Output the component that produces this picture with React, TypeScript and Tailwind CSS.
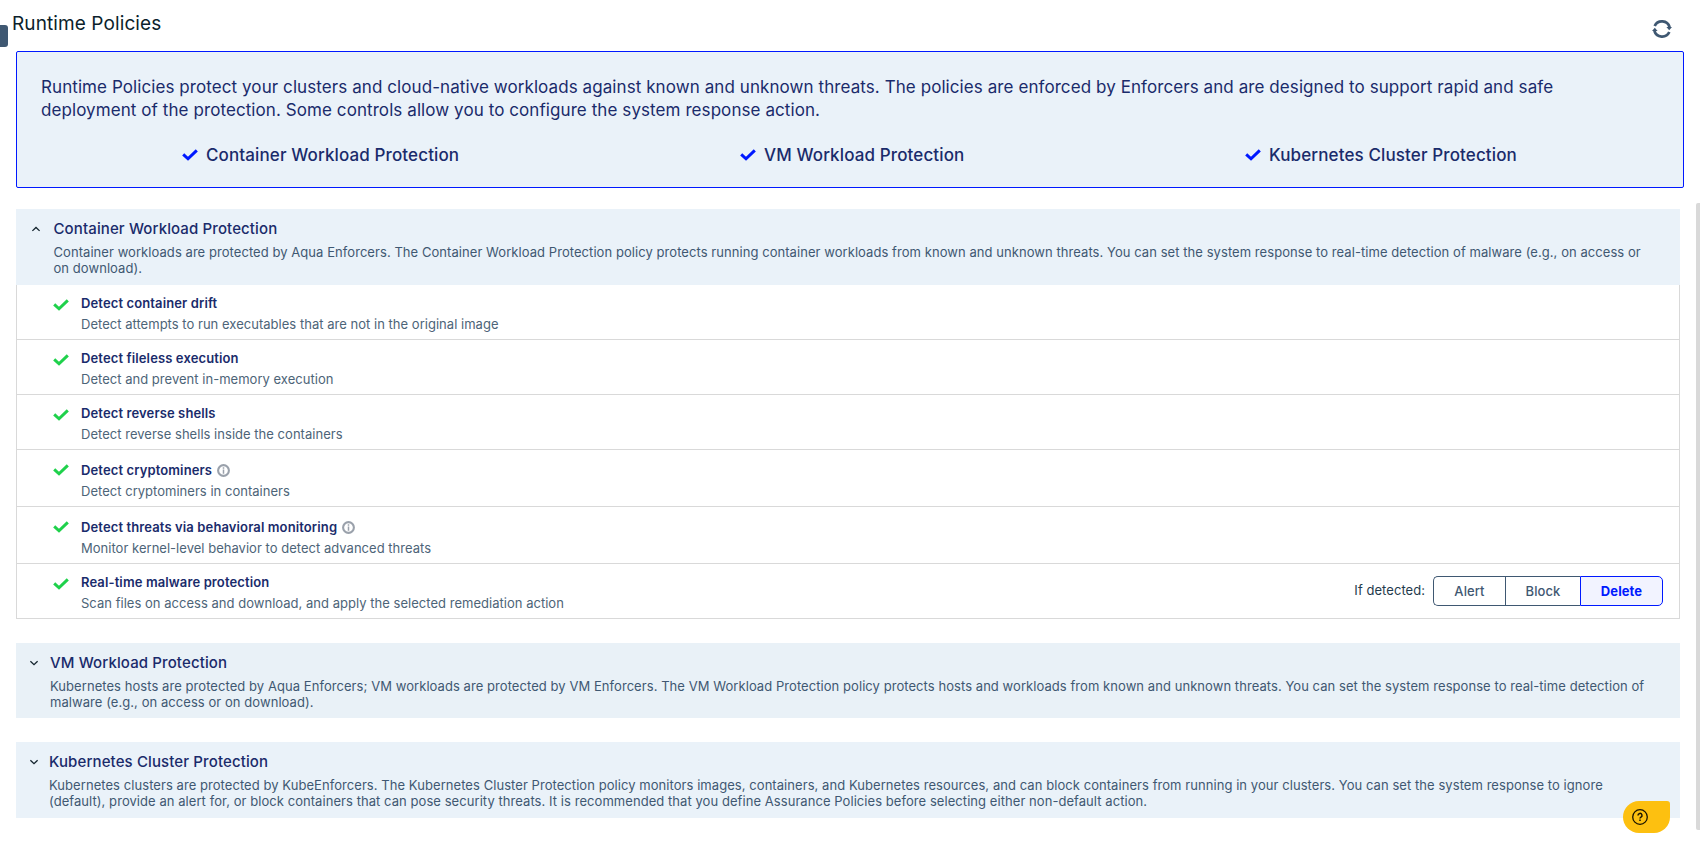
import React from "react";

const CheckMark = ({ className }: { className: string }) => (
  <svg viewBox="0 0 16 12" fill="none" stroke="currentColor" className={className}>
    <path d="M1.2 5.4 L6 9.8 L14.8 1.4" strokeWidth="3" />
  </svg>
);

const Chevron = ({ up = false }: { up?: boolean }) => (
  <svg viewBox="0 0 10 6" fill="none" stroke="#14242e" strokeWidth="1.3" className="mt-[9px] h-[6px] w-[10px] shrink-0">
    <path d={up ? "M1.4 4.9 L5 1.5 L8.6 4.9" : "M1.4 1.3 L5 4.7 L8.6 1.3"} />
  </svg>
);

const InfoIcon = () => (
  <svg viewBox="0 0 13 13" fill="none" className="mb-px ml-[4.5px] h-[13px] w-[13px]">
    <circle cx="6.5" cy="6.5" r="5.4" stroke="#9aa1ab" strokeWidth="2.1" />
    <path d="M6.5 3.2v1.5M6.5 5.5v4.2" stroke="#9aa1ab" strokeWidth="1.5" />
  </svg>
);

type Control = { title: string; text: string; info?: boolean; actions?: boolean };

const controls: Control[] = [
  { title: "Detect container drift", text: "Detect attempts to run executables that are not in the original image" },
  { title: "Detect fileless execution", text: "Detect and prevent in-memory execution" },
  { title: "Detect reverse shells", text: "Detect reverse shells inside the containers" },
  { title: "Detect cryptominers", text: "Detect cryptominers in containers", info: true },
  { title: "Detect threats via behavioral monitoring", text: "Monitor kernel-level behavior to detect advanced threats", info: true },
  { title: "Real-time malware protection", text: "Scan files on access and download, and apply the selected remediation action", actions: true },
];

const ActionGroup = () => (
  <div className="mr-4 ml-auto flex items-start pt-3">
    <span className="mt-1 mr-2 text-[13px] leading-[20px] tracking-[0.05px] text-[#1f3b4d]">If detected:</span>
    <div className="flex h-[30px] text-[13px] leading-[20px] font-medium tracking-[0.1px] text-[#3f5872]">
      <button className="w-[72px] rounded-l-[5px] border border-r-0 border-[#3f5872]">Alert</button>
      <button className="w-[75px] border border-r-0 border-[#3f5872]">Block</button>
      <button className="w-[83px] rounded-r-[5px] border border-[#0019ff] bg-[#f2f3ff] font-bold text-[#0019ff]">Delete</button>
    </div>
  </div>
);

const ControlRow = ({ title, text, info, actions }: Control) => (
  <div className={`flex border-b border-[#d9d9d9] pl-9 ${info ? "h-[57px]" : "h-[55px]"}`}>
    <CheckMark className="mt-[14px] h-[12px] w-[16px] text-[#1fd14b]" />
    <div className={`ml-[12px] ${info ? "pt-[11px]" : "pt-[9px]"}`}>
      <div className="flex h-[20px] items-center text-[13px] font-semibold tracking-[0.12px] text-[#1a2b6b]">
        {title}
        {info && <InfoIcon />}
      </div>
      <p className="text-[13px] leading-[20px] tracking-[0.025px] text-[#4d6478]">{text}</p>
    </div>
    {actions && <ActionGroup />}
  </div>
);

type HeaderProps = { title: string; open?: boolean; className: string; gap: string; children: React.ReactNode };

const SectionHeader = ({ title, open, className, gap, children }: HeaderProps) => (
  <div className={`flex pt-2 ${className}`}>
    <Chevron up={open} />
    <div className={gap}>
      <h2 className="text-[15px] leading-[24px] font-medium tracking-[0.12px] text-[#1a2b6b]">{title}</h2>
      <p className="mt-[3px] text-[13px] leading-[16px] tracking-[0.06px] text-[#3f5872]">{children}</p>
    </div>
  </div>
);

export default function App() {
  return (
    <div className="relative h-[846px] w-[1700px] overflow-hidden bg-white font-['Inter',sans-serif]">
      <div className="absolute top-[25px] left-0 h-[22px] w-[8px] rounded-r-[3px] bg-[#3f5872]" />
      <header className="flex h-[51px] justify-between pr-7 pl-3">
        <h1 className="mt-[10px] text-[19px] leading-[27px] tracking-[0.1px] text-[#0c1f2c]">Runtime Policies</h1>
        <svg viewBox="0 0 20 20" fill="none" stroke="#3f5872" strokeWidth="2.8" className="mt-[19px] h-5 w-5">
          <path d="M2.7 7A8 8 0 0 1 17.6 8.2" />
          <path d="M17.3 13A8 8 0 0 1 2.4 11.8" />
          <path d="M14.4 8H20l-2.8 3.2zM5.6 12H0l2.8-3.2z" fill="#3f5872" stroke="none" />
        </svg>
      </header>

      <section className="ml-4 h-[137px] w-[1668px] rounded-[2px] border border-[#0019ff] bg-[#eaf2f9] pt-[24px] text-[#1a2b6b]">
        <p className="ml-6 w-[1580px] text-[17px] leading-[23px] tracking-[0.08px]">
          Runtime Policies protect your clusters and cloud-native workloads against known and unknown threats. The policies
          are enforced by Enforcers and are designed to support rapid and safe deployment of the protection. Some controls
          allow you to configure the system response action.
        </p>
        <div className="mt-5 flex pl-[165px] text-[17px] leading-[26px] font-medium tracking-[0.12px]">
          <div className="flex w-[558px] items-center gap-2">
            <CheckMark className="h-[12px] w-[16px] text-[#0019ff]" />
            Container Workload Protection
          </div>
          <div className="flex w-[505px] items-center gap-2">
            <CheckMark className="h-[12px] w-[16px] text-[#0019ff]" />
            VM Workload Protection
          </div>
          <div className="flex items-center gap-2">
            <CheckMark className="h-[12px] w-[16px] text-[#0019ff]" />
            Kubernetes Cluster Protection
          </div>
        </div>
      </section>

      <main className="mt-[21px] ml-4 w-[1664px]">
        <SectionHeader title="Container Workload Protection" open className="h-[76px] bg-[#eaf2f9] pl-[15px]" gap="ml-[12.5px] w-[1600px]">
          Container workloads are protected by Aqua Enforcers. The Container Workload Protection policy protects running
          container workloads from known and unknown threats. You can set the system response to real-time detection of
          malware (e.g., on access or on download).
        </SectionHeader>
        <div className="border-x border-[#d9d9d9]">
          {controls.map((c) => (
            <ControlRow key={c.title} {...c} />
          ))}
        </div>
        <SectionHeader title="VM Workload Protection" className="mt-[24px] h-[75px] bg-[#e9f1f7] pl-[13px]" gap="ml-[11px] w-[1610px]">
          Kubernetes hosts are protected by Aqua Enforcers; VM workloads are protected by VM Enforcers. The VM Workload
          Protection policy protects hosts and workloads from known and unknown threats. You can set the system response to
          real-time detection of malware (e.g., on access or on download).
        </SectionHeader>
        <SectionHeader title="Kubernetes Cluster Protection" className="mt-[24px] h-[76px] bg-[#eaf2f9] pl-[13px]" gap="ml-[10px] w-[1600px]">
          Kubernetes clusters are protected by KubeEnforcers. The Kubernetes Cluster Protection policy monitors images,
          containers, and Kubernetes resources, and can block containers from running in your clusters. You can set the
          system response to ignore (default), provide an alert for, or block containers that can pose security threats. It
          is recommended that you define Assurance Policies before selecting either non-default action.
        </SectionHeader>
      </main>

      <div className="absolute top-[203px] right-0 h-[627px] w-[4px] rounded-l-[2px] bg-[#d9d9d9]" />
      <button className="absolute top-[801px] left-[1623px] h-[32px] w-[47px] rounded-[16px_3px_16px_16px] bg-[#fdc010] pl-[9px]">
        <svg viewBox="0 0 16 16" fill="none" stroke="#1a1400" strokeWidth="1.3" className="h-4 w-4">
          <circle cx="8" cy="8" r="7.3" />
          <path d="M6 6.4a2 2 0 1 1 3 1.7c-.7.4-1 .7-1 1.4M8 10.6v1.3" strokeWidth="1.5" />
        </svg>
      </button>
    </div>
  );
}
